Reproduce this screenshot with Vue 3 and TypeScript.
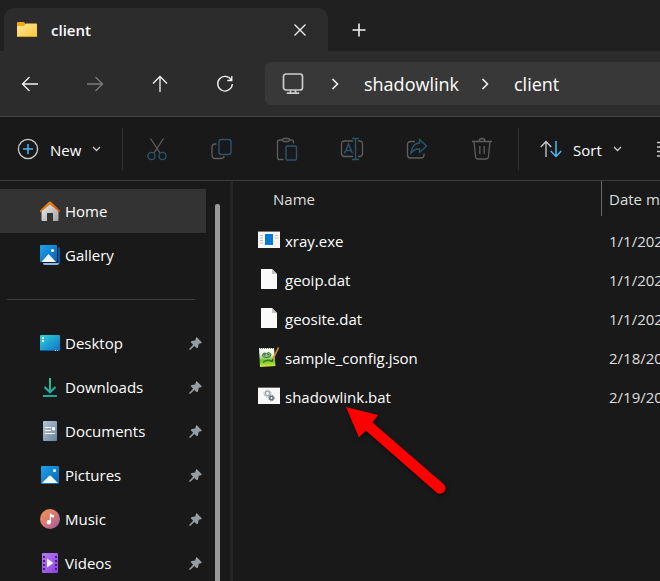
<script setup lang="ts">
interface Place {
  id: string
  label: string
}

interface FileRow {
  name: string
  icon: 'exe' | 'blank' | 'json' | 'bat'
  modified: string
}

const navButtons = [
  { id: 'back', label: 'Back', disabled: false },
  { id: 'forward', label: 'Forward', disabled: true },
  { id: 'up', label: 'Up', disabled: false },
  { id: 'refresh', label: 'Refresh', disabled: false },
]

const crumbs = ['shadowlink', 'client']

const tools = [
  { id: 'cut', label: 'Cut' },
  { id: 'copy', label: 'Copy' },
  { id: 'paste', label: 'Paste' },
  { id: 'rename', label: 'Rename' },
  { id: 'share', label: 'Share' },
  { id: 'delete', label: 'Delete' },
]

const mainPlaces: Place[] = [
  { id: 'home', label: 'Home' },
  { id: 'gallery', label: 'Gallery' },
]

const pinnedPlaces: Place[] = [
  { id: 'desktop', label: 'Desktop' },
  { id: 'downloads', label: 'Downloads' },
  { id: 'documents', label: 'Documents' },
  { id: 'pictures', label: 'Pictures' },
  { id: 'music', label: 'Music' },
  { id: 'videos', label: 'Videos' },
]

const files: FileRow[] = [
  { name: 'xray.exe', icon: 'exe', modified: '1/1/202' },
  { name: 'geoip.dat', icon: 'blank', modified: '1/1/202' },
  { name: 'geosite.dat', icon: 'blank', modified: '1/1/202' },
  { name: 'sample_config.json', icon: 'json', modified: '2/18/20' },
  { name: 'shadowlink.bat', icon: 'bat', modified: '2/19/20' },
]
</script>

<template>
  <div class="explorer">
    <svg class="defs" aria-hidden="true">
      <defs>
        <linearGradient id="g-folder" x1="0" y1="0" x2="1" y2="1">
          <stop offset="0" stop-color="#ffe69a" /><stop offset="1" stop-color="#fdc735" />
        </linearGradient>
        <linearGradient id="g-blue" x1="0" y1="0" x2="1" y2="1">
          <stop offset="0" stop-color="#1fa4e8" /><stop offset="1" stop-color="#0562b8" />
        </linearGradient>
        <linearGradient id="g-roof" x1="0" y1="0" x2="1" y2="1">
          <stop offset="0" stop-color="#f79420" /><stop offset="1" stop-color="#d14a06" />
        </linearGradient>
        <linearGradient id="g-wall" x1="0" y1="0" x2="1" y2="1">
          <stop offset="0" stop-color="#ececec" /><stop offset="1" stop-color="#a4a4a4" />
        </linearGradient>
        <linearGradient id="g-desk" x1="0" y1="0" x2="1" y2="1">
          <stop offset="0" stop-color="#2fd3dc" /><stop offset="1" stop-color="#0f6fc4" />
        </linearGradient>
        <linearGradient id="g-down" gradientUnits="userSpaceOnUse" x1="3" y1="1" x2="17" y2="20">
          <stop offset="0" stop-color="#35c88a" /><stop offset="1" stop-color="#12a3a5" />
        </linearGradient>
        <linearGradient id="g-doc" x1="0" y1="0" x2="1" y2="1">
          <stop offset="0" stop-color="#b4c5d8" /><stop offset="1" stop-color="#6883a2" />
        </linearGradient>
        <linearGradient id="g-music" x1="0" y1="0" x2="1" y2="1">
          <stop offset="0" stop-color="#f29a55" /><stop offset="0.5" stop-color="#d9766f" /><stop offset="1" stop-color="#9558b4" />
        </linearGradient>
        <linearGradient id="g-video" x1="0" y1="0" x2="1" y2="1">
          <stop offset="0" stop-color="#b67bf5" /><stop offset="1" stop-color="#8a42dc" />
        </linearGradient>
        <linearGradient id="g-json" x1="0" y1="0" x2="0" y2="1">
          <stop offset="0" stop-color="#ffffff" /><stop offset="0.35" stop-color="#e2f3d4" /><stop offset="0.65" stop-color="#6cc22f" /><stop offset="1" stop-color="#d8ec3c" />
        </linearGradient>
      </defs>
    </svg>

    <header class="tabs">
      <div class="tab">
        <svg width="20" height="17" viewBox="0 0 20 17" aria-hidden="true">
          <path d="M0 2Q0 1 1 1H6.8L8.8 3V6H0Z" fill="#f5a80c" />
          <path d="M0 5H7L9 2.5H19Q20 2.5 20 3.5V15Q20 16 19 16H1Q0 16 0 15Z" fill="url(#g-folder)" />
          <path d="M0.5 15.5H19.5" stroke="#dda21f" />
        </svg>
        <span class="tab-title">client</span>
        <button class="icon-button" aria-label="Close tab">
          <svg width="12" height="12" viewBox="0 0 12 12"><path d="M.5 .5L11.5 11.5M11.5 .5L.5 11.5" class="line" /></svg>
        </button>
      </div>
      <button class="icon-button new-tab" aria-label="New tab">
        <svg width="14" height="14" viewBox="0 0 14 14"><path d="M7 .5V13.5M.5 7H13.5" class="line bold" /></svg>
      </button>
    </header>

    <div class="navbar">
      <div class="nav-buttons">
        <button v-for="b in navButtons" :key="b.id" class="icon-button nav-button" :disabled="b.disabled" :aria-label="b.label">
          <svg width="18" height="18" viewBox="0 0 18 18" class="line">
            <path v-if="b.id === 'back'" d="M17 9H1.5M8.5 2L1.5 9L8.5 16" />
            <path v-else-if="b.id === 'forward'" d="M1 9H16.5M9.5 2L16.5 9L9.5 16" />
            <path v-else-if="b.id === 'up'" d="M9 17V1.5M2 8.5L9 1.5L16 8.5" />
            <path v-else d="M15.3 5A7.3 7.3 0 1 0 16.3 9M15.8 1V5.5H11.3" />
          </svg>
        </button>
      </div>
      <nav class="address" aria-label="Address">
        <svg width="22" height="22" viewBox="0 0 22 22" class="line soft monitor" aria-hidden="true">
          <rect x="1.5" y="1" width="19" height="16" rx="2.5" />
          <path d="M8.5 17V20M13.5 17V20M4.8 20.2H17.2" />
        </svg>
        <template v-for="c in crumbs" :key="c">
          <svg class="line bold crumb-arrow" width="8" height="12" viewBox="0 0 8 12" aria-hidden="true"><path d="M1.5 1L6.5 6L1.5 11" /></svg>
          <a href="#">{{ c }}</a>
        </template>
      </nav>
    </div>

    <div class="toolbar">
      <button class="menu-button new">
        <svg width="22" height="22" viewBox="0 0 22 22" aria-hidden="true">
          <circle cx="11" cy="11" r="9.6" class="line soft" />
          <path d="M11 6V16M6 11H16" class="accent" />
        </svg>
        <span class="menu-label">New</span>
        <svg width="9" height="6" viewBox="0 0 9 6" class="line soft" aria-hidden="true"><path d="M1 1L4.5 4.5L8 1" /></svg>
      </button>
      <span class="rule"></span>
      <div class="tools">
        <button v-for="t in tools" :key="t.id" class="icon-button tool" disabled :aria-label="t.label">
          <svg width="24" height="24" viewBox="0 0 24 24">
            <template v-if="t.id === 'cut'">
              <path class="gray" d="M5.5 1.5L15 16M18.5 1.5L9 16" />
              <circle class="blue" cx="6.5" cy="19" r="3.6" /><circle class="blue" cx="17.5" cy="19" r="3.6" />
            </template>
            <template v-else-if="t.id === 'copy'">
              <path class="gray" d="M6.5 7H5Q2 7 2 10V18Q2 21.5 5 21.5H11Q14 21.5 14 19" />
              <rect class="blue" x="9" y="2.5" width="12" height="15" rx="2.5" />
            </template>
            <template v-else-if="t.id === 'paste'">
              <path class="gray" d="M8.500 22.500H4.500Q2.500 22.500 2.500 20.500V5Q2.500 3 4.500 3H7M15 3H17Q18.500 3 18.500 5V6.500" />
              <rect class="gray" x="7.500" y="1.500" width="7" height="3" rx="1.500" />
              <rect class="blue" x="11" y="9" width="10.500" height="14" rx="1.500" />
            </template>
            <template v-else-if="t.id === 'rename'">
              <path class="gray" d="M13 4H4.500Q1.500 4 1.500 7V16.500Q1.500 19.500 4.500 19.500H13M18 4H19.500Q22.500 4 22.500 7V16.500Q22.500 19.500 19.500 19.500H18" />
              <path class="blue" d="M12 1.500H19M12 22.500H19M15.500 1.500V22.500M4.500 16.500L8.500 7L12.500 16.500M5.800 13.500H11.200" />
            </template>
            <template v-else-if="t.id === 'share'">
              <path class="gray" d="M10 4.500H5.500Q2.500 4.500 2.500 7.500V18Q2.500 21 5.500 21H16Q19 21 19 18V16.500" />
              <path class="blue" d="M14.500 2.500L21.500 9L14.500 15.500V12Q9.500 11.500 6 16Q7 6.500 14.500 6Z" />
            </template>
            <template v-else>
              <path class="gray" d="M2 4.500H22M9 4.500Q9 1.500 12 1.500T15 4.500M4 4.500L5.600 20Q5.900 22 7.500 22H16.500Q18.100 22 18.400 20L20 4.500M9.800 9V17M14.200 9V17" />
            </template>
          </svg>
        </button>
      </div>
      <span class="rule"></span>
      <button class="menu-button sort">
        <svg width="22" height="18" viewBox="0 0 22 18" aria-hidden="true">
          <path d="M6 17V1.500M.8 7L6 1.500L11.200 7" class="line soft" />
          <path d="M16 1V16.500M10.800 11L16 16.500L21.200 11" class="accent" />
        </svg>
        <span class="menu-label">Sort</span>
        <svg width="9" height="6" viewBox="0 0 9 6" class="line soft" aria-hidden="true"><path d="M1 1L4.5 4.5L8 1" /></svg>
      </button>
      <button class="icon-button view" aria-label="View">
        <svg width="22" height="16" viewBox="0 0 22 16" class="line soft"><path d="M0 1.500H22M0 6H22M0 10.500H22M0 15H22" /></svg>
      </button>
    </div>

    <div class="body">
      <aside class="sidebar">
        <nav class="places" aria-label="Places">
          <a v-for="p in mainPlaces" :key="p.id" href="#" class="place" :class="{ current: p.id === 'home' }">
            <svg v-if="p.id === 'home'" width="20" height="20" viewBox="0 0 20 20" aria-hidden="true">
              <path d="M1.500 9.500L10 2L18.500 9.500V19Q18.500 20 17.500 20H13V12.500Q13 12 12.500 12H7.500Q7 12 7 12.500V20H2.500Q1.500 20 1.500 19Z" fill="url(#g-wall)" />
              <path d="M0 9.600L9 .8Q10 0 11 .8L20 9.600V11.500L10 3.600L0 11.500Z" fill="url(#g-roof)" />
            </svg>
            <svg v-else width="20" height="20" viewBox="0 0 20 20" aria-hidden="true">
              <path d="M5 2.500H20V17Q20 20 17 20H3V18H17.500Z" fill="#0758a8" />
              <path d="M3 18H19Q18.500 20 17 20H5Q3.500 20 3 18Z" fill="#85b9ea" />
              <rect width="18" height="18" rx="1" fill="#191919" />
              <rect width="17" height="17" rx="1" fill="url(#g-blue)" />
              <path d="M1.500 17L8.500 9L16 17Z" fill="#f4f9ff" /><circle cx="12.500" cy="5.500" r="1.500" fill="#fff" />
            </svg>
            <span>{{ p.label }}</span>
          </a>
          <hr />
          <a v-for="p in pinnedPlaces" :key="p.id" href="#" class="place">
            <svg width="20" height="20" viewBox="0 0 20 20" aria-hidden="true">
              <template v-if="p.id === 'desktop'">
                <rect y="2" width="20" height="16" rx="1" fill="url(#g-desk)" />
                <path d="M2 4H4V6H2ZM2 7H4V9H2Z" fill="#fff" /><path d="M0 17.500H20" stroke="#0d5aa4" />
                <path d="M15 17.500H16M17 17.500H18" stroke="#fff" />
              </template>
              <template v-else-if="p.id === 'downloads'">
                <path d="M10 1V15M4.500 10L10 15.300L15.500 10M3 19H17" fill="none" stroke="url(#g-down)" stroke-width="2" />
              </template>
              <template v-else-if="p.id === 'documents'">
                <rect x="3" width="14" height="20" rx="1" fill="url(#g-doc)" />
                <path d="M5 6.500H11M5 9.500H11M5 12.500H15M12.500 6.500H14.500V9H12.500Z" stroke="#fff" fill="#fff" />
              </template>
              <template v-else-if="p.id === 'pictures'">
                <rect x="1" y="1" width="18" height="18" rx="1" fill="url(#g-blue)" />
                <path d="M2 18L8.800 11.200Q10 10 11.200 11.200L18 18Z" fill="#f4f9ff" /><circle cx="14.500" cy="5.500" r="1.500" fill="#fff" />
              </template>
              <template v-else-if="p.id === 'music'">
                <circle cx="10" cy="10" r="10" fill="url(#g-music)" />
                <circle cx="8.800" cy="13.200" r="2.200" fill="#fff" /><path d="M9.800 13V4.500H11Q11.500 6 14 6V8.500Q12 8.500 11 7.800V13Z" fill="#fff" />
              </template>
              <template v-else>
                <rect x="2" width="16" height="20" rx="1" fill="url(#g-video)" />
                <path d="M4 3V18M16 3V18" stroke="#48217d" stroke-width="2" stroke-dasharray="2 2" />
                <path d="M7 5.500L13.500 10L7 14.500Z" fill="#f2f2f2" />
              </template>
            </svg>
            <span>{{ p.label }}</span>
            <svg class="pin" width="13" height="13" viewBox="0 0 13 13" aria-hidden="true">
              <path d="M7.600 0L13 5.400L11.800 6.200L9.800 6.800L9 10.600L7.800 11.300L5.300 8.900L1.300 12.700L.2 12.800L.3 11.700L4.100 7.700L1.800 5.300L2.500 4.100L6.200 3.400L6.800 1.200Z" fill="#949ca4" />
            </svg>
          </a>
        </nav>
        <div class="scroll"></div>
      </aside>

      <main class="files">
        <table>
          <thead>
            <tr><th class="name">Name</th><th class="date">Date modified</th></tr>
          </thead>
          <tbody>
            <tr v-for="f in files" :key="f.name">
              <td class="name">
                <div class="file">
                  <svg width="22" height="22" viewBox="0 1 22 22" aria-hidden="true">
                    <template v-if="f.icon === 'exe'">
                      <rect y="2" width="22" height="17" fill="#f6f6f6" /><path d="M0 2.500H22" stroke="#777" />
                      <path d="M2 6.500H5M2 9H5M2 11.500H5M2 14H5M17 6.500H20M17 9H20" stroke="#bcbcbc" />
                      <rect x="7" y="5" width="8" height="11" fill="#0878d1" />
                    </template>
                    <template v-else-if="f.icon === 'blank'">
                      <path d="M3 1H14L19 6V21H3Z" fill="#fafafa" />
                      <path d="M14 1V6H19Z" fill="#c4c4c4" />
                    </template>
                    <template v-else-if="f.icon === 'json'">
                      <path d="M1 2H16L17.500 20L2 21Z" fill="url(#g-json)" />
                      <path d="M2 2.500H16" stroke="#777" stroke-dasharray="1 1" />
                      <path d="M4 9.500Q5.500 5.500 8.500 7.500Q11.500 5 13 8.500Q13 11.500 9 11.500Q5 11.500 4 9.500Z" fill="#8fc58a" stroke="#3f6f45" />
                      <path d="M5 16.500Q9 12.500 14 15.500" fill="none" stroke="#2f7a2c" stroke-width="1.500" />
                      <path d="M5.500 8.800H7.500M9.500 8.800H11.500" stroke="#24452a" />
                      <path d="M20.500 1.500L14.500 14" stroke="#d98d16" stroke-width="1.700" /><path d="M14.800 13L14 16" stroke="#5a3a10" />
                    </template>
                    <template v-else>
                      <rect y="2" width="22" height="17" fill="#f8f8f8" /><path d="M0 2.500H22" stroke="#666" />
                      <circle cx="9.500" cy="8.500" r="2.200" fill="none" stroke="#a5adb4" stroke-width="1.600" />
                      <circle cx="9.500" cy="8.500" r="3.500" fill="none" stroke="#a5adb4" stroke-dasharray="1.400 1.350" />
                      <circle cx="13.500" cy="13" r="1.700" fill="none" stroke="#68727a" stroke-width="1.600" />
                      <circle cx="13.500" cy="13" r="2.800" fill="none" stroke="#68727a" stroke-dasharray="1.200 1" />
                    </template>
                  </svg>
                  <span>{{ f.name }}</span>
                </div>
              </td>
              <td class="date">{{ f.modified }}</td>
            </tr>
          </tbody>
        </table>
        <svg class="pointer" width="110" height="100" viewBox="0 0 110 100" aria-hidden="true">
          <path d="M5 5L37 13L31.500 20.500L102.500 82A5.500 5.500 0 0 1 95.500 90.500L24.800 28.500L18 35.500Z" fill="#f00" />
        </svg>
      </main>
    </div>
  </div>
</template>

<style>
body {
  background: #191919;
}
</style>

<style scoped>
.explorer {
  display: flex;
  flex-direction: column;
  height: 100vh;
  overflow: hidden;
  background: #191919;
  color: #fff;
  font: 15px/20px "Open Sans", "Noto Sans", sans-serif;
}
.explorer * {
  box-sizing: border-box;
}
.defs {
  position: absolute;
  width: 0;
  height: 0;
}
svg {
  display: block;
  flex: none;
}
button {
  border: 0;
  padding: 0;
  background: none;
  color: inherit;
  font: inherit;
}
a {
  color: inherit;
  text-decoration: none;
}
.icon-button {
  display: flex;
  align-items: center;
  justify-content: center;
}
.line {
  fill: none;
  stroke: #f2f2f2;
  stroke-width: 1.3;
}
.soft {
  stroke: #ccc;
}
.bold {
  stroke-width: 1.6;
}
.monitor {
  stroke-width: 1.7;
}
.accent {
  fill: none;
  stroke: #4cb8f5;
  stroke-width: 1.5;
}
.gray {
  fill: none;
  stroke: #5e5e5e;
  stroke-width: 1.3;
}
.blue {
  fill: none;
  stroke: #28566e;
  stroke-width: 1.4;
}
.tabs {
  display: flex;
  flex: none;
  height: 51px;
  padding: 8px 4px 0;
  background: #202020;
}
.tab {
  display: flex;
  align-items: center;
  width: 324px;
  padding: 0 16px 0 13px;
  gap: 14px;
  border-radius: 10px 10px 0 0;
  background: #2c2c2c;
}
.tab-title {
  flex: 1;
  font-weight: 600;
}
.tab .icon-button {
  width: 24px;
  height: 24px;
}
.new-tab {
  width: 61px;
}
.navbar {
  display: flex;
  flex: none;
  align-items: center;
  height: 66px;
  background: #2c2c2c;
  border-bottom: 1px solid #404040;
}
.nav-buttons {
  display: flex;
  flex: none;
  gap: 5px;
}
.nav-button {
  width: 60px;
  height: 44px;
}
.nav-button:disabled {
  opacity: 0.4;
}
.address {
  display: flex;
  flex: 1;
  align-items: center;
  height: 43px;
  margin-left: 10px;
  padding-left: 17px;
  border-radius: 6px 0 0 6px;
  background: #383838;
  font-size: 18px;
  line-height: 24px;
}
.crumb-arrow {
  margin: 0 25px 0 22px;
}
.monitor + .crumb-arrow {
  margin-left: 27px;
}
.toolbar {
  display: flex;
  flex: none;
  align-items: center;
  height: 64px;
  padding-top: 1px;
  overflow: hidden;
  border-bottom: 1px solid #3c3c3c;
}
.menu-button {
  display: flex;
  flex: none;
  align-items: center;
  gap: 11px;
}
.menu-label {
  padding-top: 2px;
}
.new {
  width: 122px;
  padding-left: 17px;
}
.rule {
  flex: none;
  width: 1px;
  height: 42px;
  background: #303030;
}
.tools {
  display: flex;
  flex: none;
  padding: 0 4px 0 1px;
}
.tool {
  width: 65px;
  height: 44px;
}
.sort {
  width: 138px;
  padding-left: 21px;
}
.body {
  display: flex;
  flex: 1;
  min-height: 0;
}
.sidebar {
  display: flex;
  flex: none;
  width: 233px;
  border-right: 3px solid #252525;
  overflow: hidden;
}
.places {
  width: 206px;
  padding-top: 8px;
}
.place {
  display: flex;
  align-items: center;
  height: 44px;
  gap: 5px;
  padding: 0 4px 0 40px;
}
.current {
  background: #333;
}
.pin {
  margin-left: auto;
}
hr {
  height: 1px;
  margin: 22px 11px 21px 7px;
  border: 0;
  background: #3d3d3d;
}
.scroll {
  width: 5px;
  margin: 23px 0 0 9px;
  border-radius: 2px 2px 0 0;
  background: #999;
}
.files {
  position: relative;
  flex: 1;
  min-width: 0;
  overflow: hidden;
}
table {
  width: 100%;
  table-layout: fixed;
  border-collapse: separate;
  border-spacing: 0;
  white-space: nowrap;
}
th,
td {
  height: 39px;
  padding: 0;
  text-align: left;
  font-weight: 400;
}
th {
  height: 40px;
  color: #dedede;
}
th.name {
  padding: 0 0 4px 40px;
}
th.date {
  padding-bottom: 4px;
  background: linear-gradient(#666, #666) left top / 1px 35px no-repeat;
}
.date {
  width: 59px;
  padding-left: 8px;
  color: #dedede;
}
.file {
  display: flex;
  align-items: center;
  gap: 5px;
  padding-left: 25px;
}
.pointer {
  position: absolute;
  left: 108px;
  top: 221px;
  filter: drop-shadow(1px 2px 2px #0008);
}
</style>
